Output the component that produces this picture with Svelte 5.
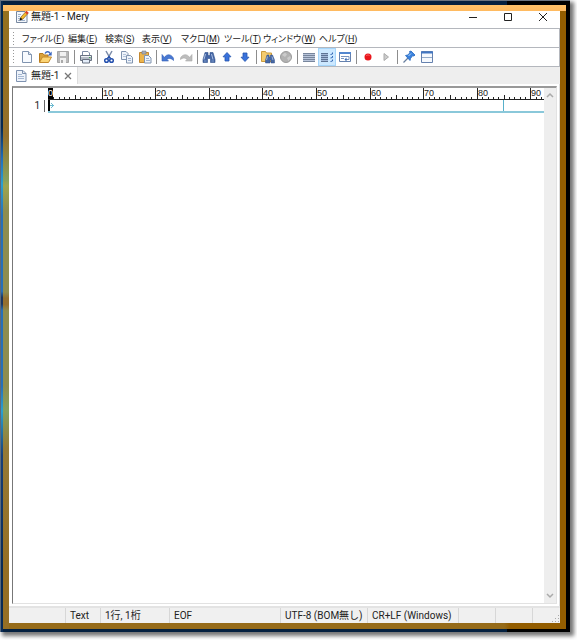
<script>
    const menus = [
        { label: 'ファイル', key: 'F' },
        { label: '編集', key: 'E' },
        { label: '検索', key: 'S' },
        { label: '表示', key: 'V' },
        { label: 'マクロ', key: 'M' },
        { label: 'ツール', key: 'T' },
        { label: 'ウィンドウ', key: 'W' },
        { label: 'ヘルプ', key: 'H' }
    ];

    const toolGroups = [
        ['new', 'open', 'save'],
        ['print'],
        ['cut', 'copy', 'paste'],
        ['undo', 'redo'],
        ['find', 'up', 'down'],
        ['grep', 'browser'],
        ['wrap-none', 'wrap-window', 'wrap-chars'],
        ['record', 'play'],
        ['pin', 'outline']
    ];

    const status = ['', 'Text', '1行, 1桁', 'EOF', 'UTF-8 (BOM無し)', 'CR+LF (Windows)', '', '', ''];

    const charWidth = 5.36;
    const wrapColumn = 85;

    let text = '';
    let activeTool = 'wrap-window';
    let textWidth = 0;

    $: columns = Array.from({ length: Math.ceil(textWidth / charWidth) }, (_, i) => ({
        col: i,
        x: Math.round(i * charWidth)
    }));

    function tickTop(col) {
        if (col % 10 === 0) return 0;
        return col % 5 === 0 ? 7 : 9;
    }
</script>

<div class="screen">
    <div class="desktop">
        <div class="window">
            <main class="client">
                <header class="titlebar">
                    <svg class="app-icon" width="14" height="14" viewBox="0 0 14 14">
                        <path d="M1.5 1.5h8.5l2 2v9H1.5z" fill="#f4f7fb" stroke="#7788a0" />
                        <path d="M3 4.5h3M3 6.5h2M3 8.5h2M3 10.5h7" stroke="#9fb2cc" />
                        <path d="M5 10l1-3 5-5.500 2 1.800-5 5.700z" fill="#f6bd2b" stroke="#8a5a18" stroke-width=".7" />
                        <path d="M10 2.500l1.500-1.800 2.200 2-1.500 1.700z" fill="#d9402f" />
                        <path d="M4.500 10.500l1-3 2 1.800z" fill="#111" />
                    </svg>
                    <h1>無題-1 - Mery</h1>
                    <div class="window-buttons">
                        <button aria-label="最小化">
                            <svg width="10" height="10" viewBox="0 0 10 10"><path d="M1 5.500h8" stroke="#222" /></svg>
                        </button>
                        <button aria-label="最大化">
                            <svg width="10" height="10" viewBox="0 0 10 10"><path d="M1.500 1.500h7v7h-7z" fill="none" stroke="#222" /></svg>
                        </button>
                        <button aria-label="閉じる">
                            <svg width="10" height="10" viewBox="0 0 10 10"><path d="M1 1l8 8M9 1l-8 8" stroke="#222" /></svg>
                        </button>
                    </div>
                </header>

                <nav class="bar menubar">
                    <span class="grip"></span>
                    {#each menus as menu}
                        <button class="menu">{menu.label}(<u>{menu.key}</u>)</button>
                    {/each}
                </nav>

                <div class="bar toolbar">
                    <span class="grip"></span>
                    {#each toolGroups as group, i}
                        {#if i > 0}<span class="separator"></span>{/if}
                        {#each group as tool}
                            <button
                                class="tool"
                                class:active={tool === activeTool}
                                aria-label={tool}
                                on:click={() => { if (tool.startsWith('wrap')) activeTool = tool; }}
                            >
                                <svg width="14" height="14" viewBox="0 0 14 14" fill="none">
                                    {#if tool === 'new'}
                                        <path d="M2.500 1.500h6l3 3v8h-9z" fill="#f8fbff" stroke="#8094b0" />
                                        <path d="M8.500 1.500v3h3" fill="#dce6f4" stroke="#8094b0" />
                                    {:else if tool === 'open'}
                                        <path d="M1.500 12V3.500h3.500l1 1.500h4v7z" fill="#d9a23c" stroke="#b67b20" />
                                        <path d="M1.500 12.500l3-5.500h9l-3 5.500z" fill="#fbd475" stroke="#c48a2c" />
                                        <path d="M7 3.500c1.500-2.500 4-2.300 5 0" stroke="#3864bd" stroke-width="1.400" />
                                        <path d="M13.700 1.500v4h-4z" fill="#3864bd" />
                                    {:else if tool === 'save'}
                                        <path d="M1.500 1.500h11v11h-11z" fill="#b9b9b9" stroke="#a5a5a5" />
                                        <path d="M4 2h6v4H4zM4 8h6v5H4z" fill="#f1f1f1" />
                                        <path d="M5 10h2v3H5z" fill="#aaa" />
                                    {:else if tool === 'print'}
                                        <path d="M3.500 5V1.500h5.500l1.500 1.500v2" fill="#fff" stroke="#7c8ba5" />
                                        <path d="M1.500 5.500h11v5h-11z" fill="#b5bcc6" stroke="#697282" />
                                        <path d="M2 6.500h10" stroke="#eef1f5" />
                                        <path d="M3.500 9.500h7v3.500h-7z" fill="#e4edf9" stroke="#697282" />
                                        <path d="M10 7.500h1.500" stroke="#3da24a" />
                                    {:else if tool === 'cut'}
                                        <path d="M4 1l4.500 8M10 1L5.500 9" stroke="#7b8ba8" stroke-width="1.500" />
                                        <circle cx="4.500" cy="10.500" r="1.800" stroke="#2450ae" stroke-width="1.500" />
                                        <circle cx="9.500" cy="10.500" r="1.800" stroke="#2450ae" stroke-width="1.500" />
                                        <path d="M5.500 8.500L7 6.500l1.500 2" stroke="#2450ae" stroke-width="1.300" />
                                    {:else if tool === 'copy'}
                                        <path d="M1.500 1.500h4.500l2 2v6h-6.500z" fill="#eef3fa" stroke="#8094b0" />
                                        <path d="M3 4.500h3M3 6.500h3" stroke="#b3c3da" />
                                        <path d="M6.500 5.500h4l2 2v5.500h-6z" fill="#eef3fa" stroke="#8094b0" />
                                        <path d="M8 8.500h3M8 10.500h3" stroke="#a0b4d2" />
                                    {:else if tool === 'paste'}
                                        <path d="M1.500 2.500h9v10h-9z" fill="#edb44a" stroke="#c28731" />
                                        <path d="M4 1h4v3H4z" fill="#a9adb5" stroke="#777e89" stroke-width=".600" />
                                        <path d="M6.500 5.500h4l2.500 2.500v5h-6.500z" fill="#eef3fa" stroke="#8094b0" />
                                        <path d="M8 8.500h3M8 10.500h4" stroke="#a0b4d2" />
                                    {:else if tool === 'undo'}
                                        <path d="M3.500 7.500c2-4 7-3.500 9 .800v2.200c-2-2-4.500-2.800-6.500-1l1.500 1.500H1V4.500z" fill="#4878d2" stroke="#3260b7" stroke-width=".600" />
                                    {:else if tool === 'redo'}
                                        <path d="M10.500 7.500c-2-4-7-3.500-9 .500v1.500c2.500-2 4.500-2 6.500 0l-1.500 1.500H13V4.500z" fill="#bdbdbd" stroke="#a9a9a9" stroke-width=".600" />
                                    {:else if tool === 'find'}
                                        <path d="M3 2.500h3v3h2v-3h3l2 7v3H8.500v-4h-3v4H1v-3z" fill="#4566a6" stroke="#31538c" stroke-width=".600" />
                                        <path d="M3.500 4L2 9.500M9.500 4L11 9.500" stroke="#a9bee2" />
                                        <path d="M2 11h2.500M9.500 11H12" stroke="#7f9cca" />
                                    {:else if tool === 'up'}
                                        <path d="M7 2.500l4 4.300H9v4.200H5V6.800H3z" fill="#3972dc" stroke="#2454ad" stroke-width=".800" />
                                    {:else if tool === 'down'}
                                        <path d="M7 11.500l4-4.300H9V3H5v4.200H3z" fill="#3972dc" stroke="#2454ad" stroke-width=".800" />
                                    {:else if tool === 'grep'}
                                        <path d="M.500 11.500v-10h4l1 1.500h5v8.500z" fill="#f4cc70" stroke="#cb9b3d" />
                                        <path d="M6 5h2v2h1.500V5h2l2 5v3h-3.500v-3h-1v3H4.500v-3z" fill="#4769a5" stroke="#304f86" stroke-width=".500" />
                                        <path d="M6.500 6.500L5.500 10M11 6.500l1 3.500" stroke="#b5c7e8" stroke-width=".800" />
                                    {:else if tool === 'browser'}
                                        <circle cx="7" cy="7" r="5.500" fill="#b2b2b2" stroke="#9b9b9b" />
                                        <path d="M3 5l3-2.500 2 2-2 2.500zM8 8l3-2 1 2-2.500 3z" fill="#cbcbcb" />
                                    {:else if tool === 'wrap-none'}
                                        <path d="M1 3.500h12M1 5.500h12M1 7.500h12M1 9.500h12M1 11.500h12" stroke="#78869d" />
                                        <path d="M1 4.500h12M1 6.500h12M1 8.500h12M1 10.500h12" stroke="#b9c5da" />
                                    {:else if tool === 'wrap-window'}
                                        <path d="M1 3.500h7M1 5.500h7M1 7.500h7M1 9.500h7M1 11.500h7" stroke="#5e7394" />
                                        <path d="M1 4.500h7M1 6.500h7M1 8.500h7M1 10.500h7" stroke="#a4b9d8" />
                                        <path d="M12.500 2.500v1.500l-2 .500M12.500 6v1.500l-2 .500M12.500 9.500v1.500l-2 .500" stroke="#3568b4" />
                                    {:else if tool === 'wrap-chars'}
                                        <path d="M1.500 2.500h11v9h-11z" fill="#fff" stroke="#6581ae" />
                                        <path d="M1 3h12" stroke="#5286cf" stroke-width="2" />
                                        <path d="M3 6.500h8M3 8.500h3M11 6.500v3H8" stroke="#7894c0" />
                                        <path d="M8.500 7.500v4l-2-2z" fill="#3568b4" />
                                    {:else if tool === 'record'}
                                        <circle cx="7" cy="7" r="3.500" fill="#e9161c" />
                                        <path d="M5 6c.500-1 2.500-1.300 3.500-.500" stroke="#ff8585" stroke-width=".700" />
                                    {:else if tool === 'play'}
                                        <path d="M5 3.500L9.500 7 5 10.500z" fill="#ccc" stroke="#aaa" />
                                    {:else if tool === 'pin'}
                                        <path d="M1.500 12.500L6 8" stroke="#697f9f" stroke-width="1.200" />
                                        <path d="M3.500 5.500l2-.500 2.500-2-.500-1.500L9 1l4 4-1 1-1.500-.200L8.500 8.500l-.500 2z" fill="#3b82de" stroke="#2467bd" stroke-width=".800" />
                                        <path d="M6.500 6L9 3.500" stroke="#b8dafb" />
                                    {:else if tool === 'outline'}
                                        <path d="M1.500 1.500h11v11h-11z" fill="#f6f9fd" stroke="#6581ae" />
                                        <path d="M1 2.500h12" stroke="#4276c2" stroke-width="2" />
                                        <path d="M2 7.500h10" stroke="#94abc9" />
                                    {/if}
                                </svg>
                            </button>
                        {/each}
                    {/each}
                </div>

                <div class="tabs">
                    <div class="tab">
                        <svg width="12" height="14" viewBox="0 0 12 14" fill="none">
                            <path d="M1.500 1.500h6.500l3 3v8H1.500z" fill="#eef3fa" stroke="#7e92b0" />
                            <path d="M7.500 1.500v3h3.500" stroke="#7e92b0" />
                            <path d="M3 5.500h4M3 7.500h6M3 9.500h6" stroke="#a6b8d3" />
                        </svg>
                        <span>無題-1</span>
                        <button class="close" aria-label="タブを閉じる">
                            <svg width="8" height="8" viewBox="0 0 8 8"><path d="M1 1l6 6M7 1L1 7" stroke="#777" stroke-width="1.300" /></svg>
                        </button>
                    </div>
                </div>

                <section class="panel">
                    <div class="editor">
                        <div class="gutter">1</div>
                        <div class="page" bind:clientWidth={textWidth}>
                            <textarea bind:value={text} aria-label="無題-1" spellcheck="false"></textarea>
                        </div>
                        <svg class="ruler" width="100%" height="25">
                            {#each columns as { col, x }}
                                <rect {x} y={tickTop(col)} width="1" height={12 - tickTop(col)} fill="#222" />
                                {#if col % 10 === 0 && col > 0}
                                    <text x={x + 1} y="8">{col}</text>
                                {/if}
                            {/each}
                            <rect y="11" width="100%" height="1" fill="#222" />
                            <rect width="5" height="11" fill="#000" />
                            <text class="inverse" x="0" y="8">0</text>
                            <rect y="12" width="2" height="11" fill="#000" />
                            <path d="M2 17.500h4M3 15l2.500 2.500L3 20" stroke="#6cbad0" fill="none" />
                            <rect x={Math.round(wrapColumn * charWidth) - 1} y="12" width="1" height="11" fill="#58b0ca" />
                            <rect y="23" width="100%" height="2" fill="#8ac8da" />
                        </svg>
                        <div class="scrollbar">
                            <svg width="8" height="6" viewBox="0 0 8 6"><path d="M1 5l3-3 3 3" stroke="#aaa" stroke-width="1.500" fill="none" /></svg>
                            <svg width="8" height="6" viewBox="0 0 8 6"><path d="M1 1l3 3 3-3" stroke="#aaa" stroke-width="1.500" fill="none" /></svg>
                        </div>
                    </div>
                </section>

                <footer class="statusbar">
                    {#each status as item}
                        <span>{item}</span>
                    {/each}
                    <svg class="size-grip" width="8" height="8" viewBox="0 0 8 8" fill="#aaa">
                        <path d="M6 0h1v1H6zM3 3h1v1H3zM6 3h1v1H6zM0 6h1v1H0zM3 6h1v1H3zM6 6h1v1H6z" />
                    </svg>
                </footer>
            </main>
        </div>
    </div>
</div>

<style>
    :global(body) {
        margin: 0;
        background: #fff;
    }

    .screen {
        box-sizing: border-box;
        display: flex;
        min-height: 100vh;
        padding: 0 7px 8px 0;
        overflow: hidden;
        font-family: Roboto, "Noto Sans CJK JP", sans-serif;
        font-size: 10px;
        line-height: 14px;
        color: #222;
    }

    .desktop {
        flex: 1;
        display: flex;
        min-width: 0;
        padding: 4px 4px 3px 2px;
        border-top: 1px solid #6b7480;
        border-left: 1px solid #59697b;
        background:
            linear-gradient(to bottom, #06284f 20%, #1f6fbd 25%, #2aa0cf 29%, #2670b8 34%, #2670b8 46%, #1b365e 47%, #1b365e 48%, #2670b8 49%, #2670b8 61%, #2aa0cf 65%, #173f78 72%, #092a55 90%) left / 2px 100% no-repeat,
            linear-gradient(to right, #04203f 89%, #000 89%);
        box-shadow: 3px 3px 4px 1px #777;
    }

    .window {
        flex: 1;
        display: flex;
        min-width: 0;
        padding: 6px;
        background:
            linear-gradient(#ffc169, #ffba60) top / 100% 6px no-repeat,
            linear-gradient(to bottom, #94701f 8%, #95702c 21%, #86a05d 28%, #9da550 29%, #8e8d4f 33%, #8e8d4f 46%, #94702f 47%, #94702f 48%, #8e8d4f 49%, #8e8d4f 61%, #84a05f 65%, #957a36 71%, #966f24 90%) left / 6px 100% no-repeat,
            linear-gradient(to right, #966b19 89%, #935d00 90%);
    }

    .client {
        flex: 1;
        display: flex;
        flex-direction: column;
        min-width: 0;
        background: #fff;
    }

    button {
        display: flex;
        align-items: center;
        justify-content: center;
        margin: 0;
        padding: 0;
        border: 0;
        background: none;
        font: inherit;
        color: inherit;
        white-space: nowrap;
    }

    .titlebar {
        display: flex;
        align-items: center;
        height: 12px;
        padding: 0 0 5px 6px;
    }

    .app-icon {
        flex: none;
    }

    h1 {
        flex: 1;
        margin: 0 0 0 2px;
        font-size: 10px;
        font-weight: 400;
    }

    .window-buttons {
        display: flex;
    }

    .window-buttons button {
        width: 35px;
        height: 12px;
    }

    .bar {
        display: flex;
        align-items: center;
        height: 18px;
        padding-left: 4px;
        border: 1px solid #b4b7bd;
        border-width: 1px 1px 0 0;
    }

    .grip {
        width: 1px;
        height: 14px;
        margin-right: 4px;
        background: repeating-linear-gradient(#999 0 1px, #fff 1px 3px);
    }

    .menubar {
        display: grid;
        grid-template-columns: 9px 46px 37px 37px 39px 43px 39px 56px auto;
        justify-content: start;
        height: 16px;
        padding-top: 2px;
        font-size: 9px;
        font-feature-settings: "palt";
    }

    .menu {
        justify-content: flex-start;
    }

    .tool {
        width: 18px;
        height: 18px;
    }

    .tool.active {
        background: #cce8ff;
        box-shadow: inset 0 0 0 1px #a5d5fa;
    }

    .separator {
        width: 1px;
        height: 14px;
        margin: 0 2px;
        background: #8d8d8d;
    }

    .tabs {
        display: flex;
        height: 17px;
        border-top: 1px solid #b4b7bd;
        background: #eee;
    }

    .tab {
        display: flex;
        align-items: center;
        gap: 4px;
        padding: 0 5px 0 6px;
        border-right: 1px solid #ddd;
        background: #fff;
    }

    .close {
        width: 8px;
        margin-left: 1px;
    }

    .panel {
        flex: 1;
        display: flex;
        min-width: 0;
        padding: 2px 2px 2px 3px;
        border-right: 1px solid #ddd;
    }

    .editor {
        flex: 1;
        display: grid;
        grid-template-columns: 35px 1fr 12px;
        grid-template-rows: 12px 12px 1fr;
        min-width: 0;
        border: 1px solid #e2e2e2;
        border-top: 2px solid #999;
        border-left-color: #777;
    }

    .gutter {
        grid-area: 2 / 1;
        height: 12px;
        margin-right: 3px;
        padding-right: 4px;
        border-right: 1px solid #666;
        line-height: 12px;
        text-align: right;
    }

    .page {
        grid-area: 2 / 2 / 4 / 3;
        display: flex;
        min-width: 0;
    }

    textarea {
        flex: 1;
        min-width: 0;
        padding: 0;
        border: 0;
        outline: 0;
        resize: none;
        background: #fff;
        font: 10px/12px "Noto Sans CJK JP", sans-serif;
    }

    .ruler {
        grid-area: 1 / 2 / 3 / 3;
        z-index: 1;
        overflow: hidden;
        pointer-events: none;
    }

    .ruler text {
        font: 9px "Liberation Sans", sans-serif;
        fill: #222;
    }

    .ruler .inverse {
        fill: #fff;
    }

    .scrollbar {
        grid-area: 1 / 3 / 4 / 4;
        display: flex;
        flex-direction: column;
        align-items: center;
        justify-content: space-between;
        padding: 4px 0;
        background: #eee;
    }

    .statusbar {
        position: relative;
        display: grid;
        grid-template-columns: 57px 35px 69px 111px 87px 91px 37px 37px 1fr;
        height: 15px;
        border-top: 2px solid #e3e3e3;
        background: #f0f0f0;
    }

    .statusbar span {
        overflow: hidden;
        padding-left: 4px;
        border-right: 1px solid #d7d7d7;
        line-height: 15px;
        white-space: nowrap;
    }

    .statusbar span:last-of-type {
        border-right: 0;
    }

    .size-grip {
        position: absolute;
        right: 0;
        bottom: 0;
    }
</style>
